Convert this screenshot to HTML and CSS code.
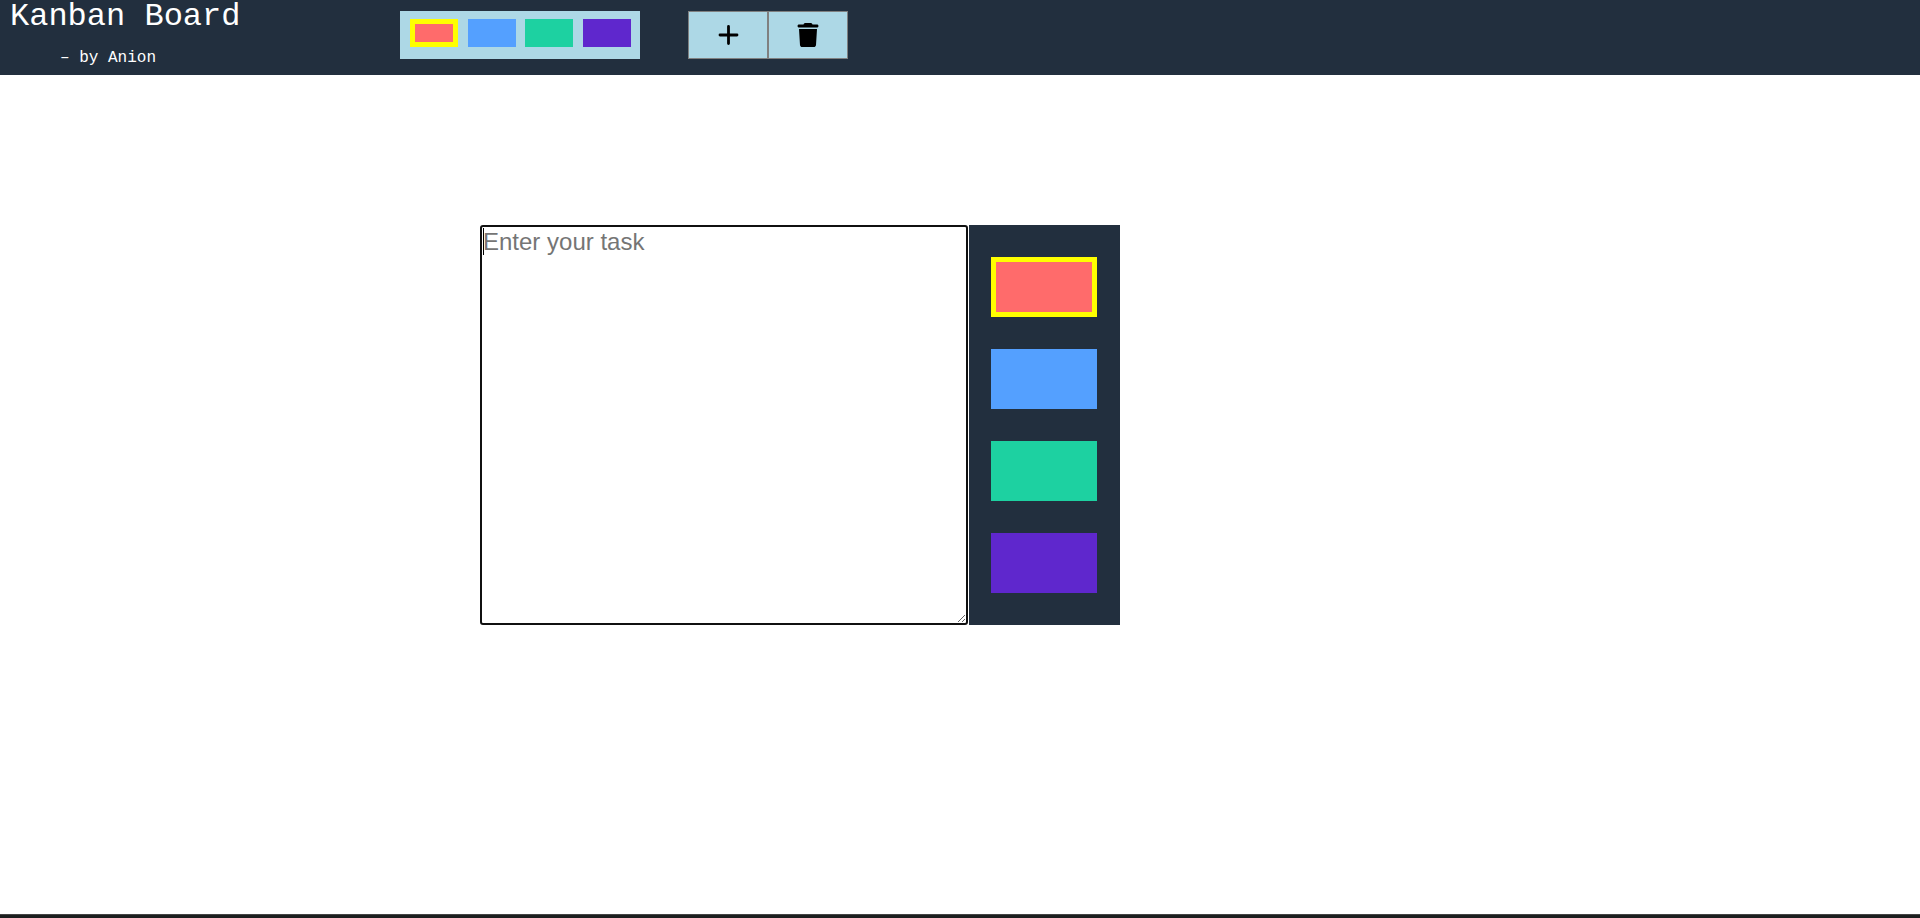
FILE: index.html
```html
<!DOCTYPE html>
<html lang="en">
<head>
<meta charset="utf-8">
<title>Kanban Board</title>
<link rel="stylesheet" href="styles.css">
</head>
<body>
<header class="header">
  <div class="brand">
    <h1 class="brand-title">Kanban Board</h1>
    <p class="brand-author">– by Anion</p>
  </div>
  <div class="filters" role="radiogroup" aria-label="Filter by colour">
    <input class="swatch red" type="radio" name="filter" aria-label="Red" checked>
    <input class="swatch blue" type="radio" name="filter" aria-label="Blue">
    <input class="swatch green" type="radio" name="filter" aria-label="Green">
    <input class="swatch purple" type="radio" name="filter" aria-label="Purple">
  </div>
  <div class="actions">
    <button class="action" type="button" aria-label="Add task">
      <svg class="icon" viewBox="0 0 24 24" aria-hidden="true"><path d="M12.500 3.500v17M4 12h17" fill="none" stroke="#000" stroke-width="2.800" stroke-linecap="round"/></svg>
    </button>
    <button class="action" type="button" aria-label="Delete task">
      <svg class="icon" viewBox="-32 0 512 512" aria-hidden="true"><path d="M135.200 17.700C140.600 6.800 151.700 0 163.800 0h120.400c12.100 0 23.200 6.800 28.600 17.700L320 32h96c17.700 0 32 14.300 32 32s-14.300 32-32 32H32C14.300 96 0 81.700 0 64s14.300-32 32-32h96zM32 128h384l-21.200 339c-1.600 25.300-22.600 45-47.900 45H101.100c-25.300 0-46.300-19.700-47.900-45z"/></svg>
    </button>
  </div>
</header>
<main class="board">
  <form class="task-modal">
    <textarea class="task-input" placeholder="Enter your task" aria-label="Task" autofocus></textarea>
    <div class="priorities" role="radiogroup" aria-label="Task colour">
      <input class="swatch red" type="radio" name="priority" aria-label="Red" checked>
      <input class="swatch blue" type="radio" name="priority" aria-label="Blue">
      <input class="swatch green" type="radio" name="priority" aria-label="Green">
      <input class="swatch purple" type="radio" name="priority" aria-label="Purple">
    </div>
  </form>
</main>
<footer class="bottom-bar"></footer>
</body>
</html>
```
FILE: styles.css
```css
* {
  box-sizing: border-box;
}

body {
  margin: 0;
  min-height: 100vh;
  display: flex;
  flex-direction: column;
  background: #fff;
  font-family: Arial, "Liberation Sans", sans-serif;
}

.header {
  display: flex;
  align-items: flex-start;
  padding-left: 10px;
  background: #222f3e;
}

.brand {
  width: 390px;
  padding-bottom: 7px;
  color: #fff;
  font-family: "Courier New", "Liberation Mono", monospace;
}

.brand-title {
  margin: 0 0 15px;
  font-size: 32px;
  line-height: 33px;
  font-weight: 400;
}

.brand-author {
  margin: 0;
  padding-left: 50px;
  font-size: 16px;
  line-height: 20px;
}

.swatch {
  appearance: none;
  margin: 0;
}

.swatch:checked {
  border: 5px solid yellow;
}

.red {
  background: #ff6b6b;
}

.blue {
  background: #54a0ff;
}

.green {
  background: #1dd1a1;
}

.purple {
  background: #5f27cd;
}

.filters {
  display: flex;
  justify-content: space-between;
  width: 240px;
  height: 48px;
  margin: 11px 48px 0 0;
  padding: 8px 9px 0 10px;
  background: lightblue;
}

.filters .swatch {
  width: 48px;
  height: 28px;
}

.actions {
  display: flex;
  margin-top: 11px;
}

.action {
  display: flex;
  align-items: center;
  justify-content: center;
  width: 80px;
  height: 48px;
  padding: 0;
  border: 1px solid gray;
  background: lightblue;
}

.icon {
  width: 24px;
  height: 24px;
}

.board {
  flex: 1;
  padding: 150px 25% 0;
}

.task-modal {
  display: flex;
  gap: 1px;
  width: 66.67%;
  height: 400px;
}

.task-input {
  flex: 1;
  padding: 1px;
  border: 2px solid #101010;
  border-radius: 3px;
  outline: none;
  font-family: inherit;
  font-size: 24px;
}

/* Steady insertion mark while the field is empty */
.task-input:placeholder-shown {
  caret-color: transparent;
  background: linear-gradient(#000, #000) 1px 1px / 1px 27px no-repeat #fff;
}

.task-input::placeholder {
  color: #757575;
}

.priorities {
  display: flex;
  flex-direction: column;
  align-items: center;
  justify-content: space-evenly;
  width: 151px;
  padding-right: 1px;
  background: #222f3e;
}

.priorities .swatch {
  width: 106px;
  height: 60px;
}

.bottom-bar {
  height: 4px;
  border-top: 1px solid #444;
  background: #1c1e1e;
}
```
